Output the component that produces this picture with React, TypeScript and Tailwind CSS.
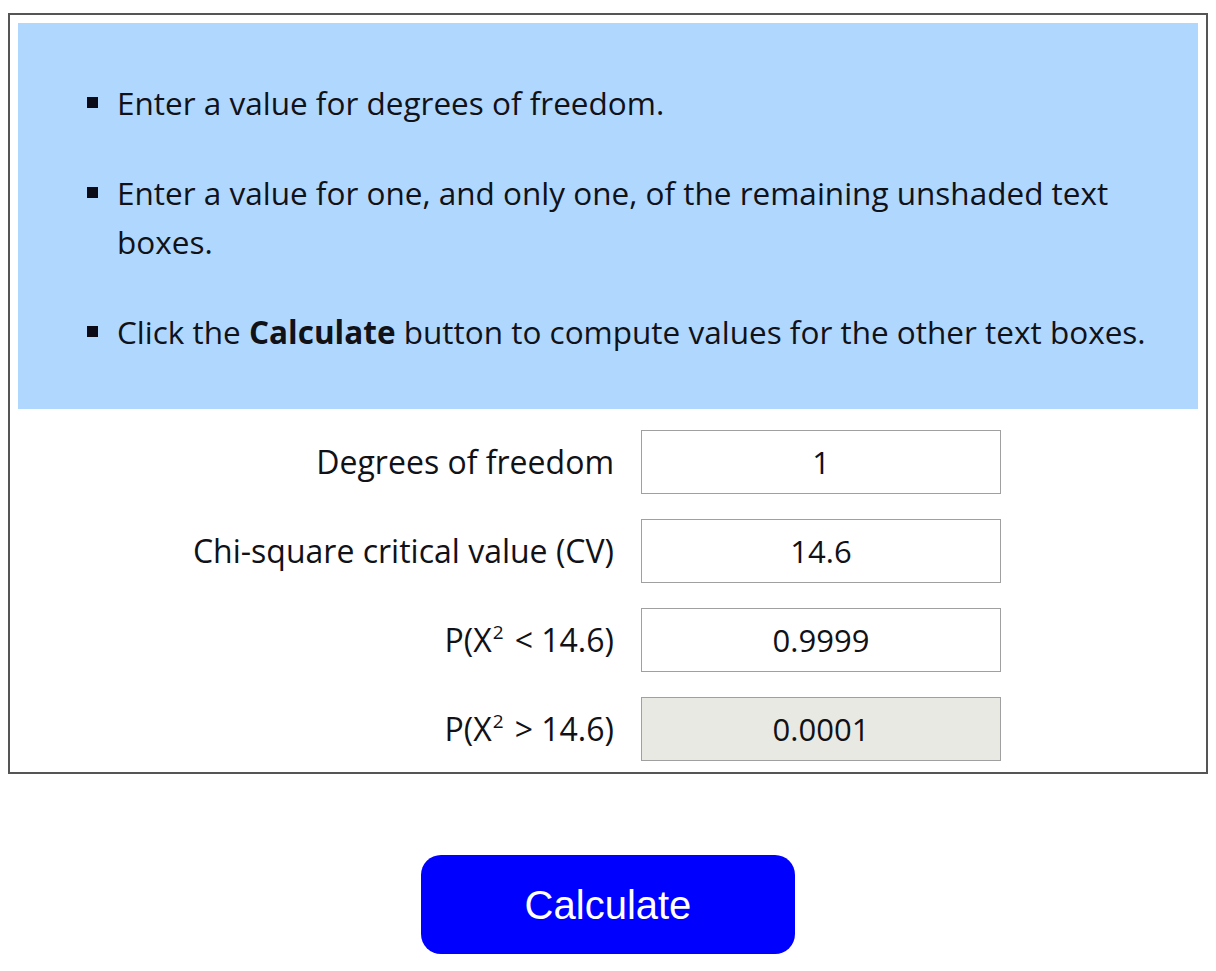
import { ReactNode } from "react";

const Sq = () => (
  <sup className="relative -top-[13px] ml-[1px] mr-[11px] align-baseline text-[19px]">2</sup>
);

const rows: { label: ReactNode; value: string; shaded?: boolean }[] = [
  { label: "Degrees of freedom", value: "1" },
  { label: "Chi-square critical value (CV)", value: "14.6" },
  {
    label: (
      <>
        P(X<Sq />&lt; 14.6)
      </>
    ),
    value: "0.9999",
  },
  {
    label: (
      <>
        P(X<Sq />&gt; 14.6)
      </>
    ),
    value: "0.0001",
    shaded: true,
  },
];

const Bullet = ({ children }: { children: ReactNode }) => (
  <li className="flex">
    <span className="mt-[19px] mr-[19px] h-[11px] w-[11px] shrink-0 bg-[#0b0b18]" />
    <span>{children}</span>
  </li>
);

const App = () => {
  return (
    <div
      className="min-h-screen bg-white pt-[13px] text-[#111118]"
      style={{ fontFamily: '"Open Sans", "Noto Sans", sans-serif' }}
    >
      <div className="mx-auto w-[1200px] border-2 border-[#555] p-[8px] pb-[11px]">
        <div className="bg-[#b0d8ff] pt-[55px] pb-[53px] pl-[69px] pr-[30px]">
          <ul className="flex flex-col gap-[41px] text-[31.5px] leading-[49px]">
            <Bullet>Enter a value for degrees of freedom.</Bullet>
            <Bullet>
              Enter a value for one, and only one, of the remaining unshaded
              text boxes.
            </Bullet>
            <Bullet>
              Click the <b className="font-bold">Calculate</b> button to compute
              values for the other text boxes.
            </Bullet>
          </ul>
        </div>
        <div className="mt-[21px] flex flex-col gap-[25px]">
          {rows.map((r, i) => (
            <div key={i} className="flex items-center">
              <div className="w-[604px] pr-[8px] text-right text-[32px] leading-[40px]">
                {r.label}
              </div>
              <div className="ml-[19px] w-[360px]">
                <div
                  className={`flex h-[64px] items-center justify-center border border-[#a0a0a0] text-[31px] ${
                    r.shaded ? "bg-[#e9e9e3]" : "bg-white"
                  }`}
                >
                  {r.value}
                </div>
              </div>
            </div>
          ))}
        </div>
      </div>
      <div className="mt-[81px] flex justify-center">
        <button
          className="h-[99px] w-[374px] rounded-[20px] bg-[#0000ff] text-[40px] text-white"
          style={{ fontFamily: '"Liberation Sans", Arial, sans-serif' }}
        >
          Calculate
        </button>
      </div>
    </div>
  );
};

export default App;
